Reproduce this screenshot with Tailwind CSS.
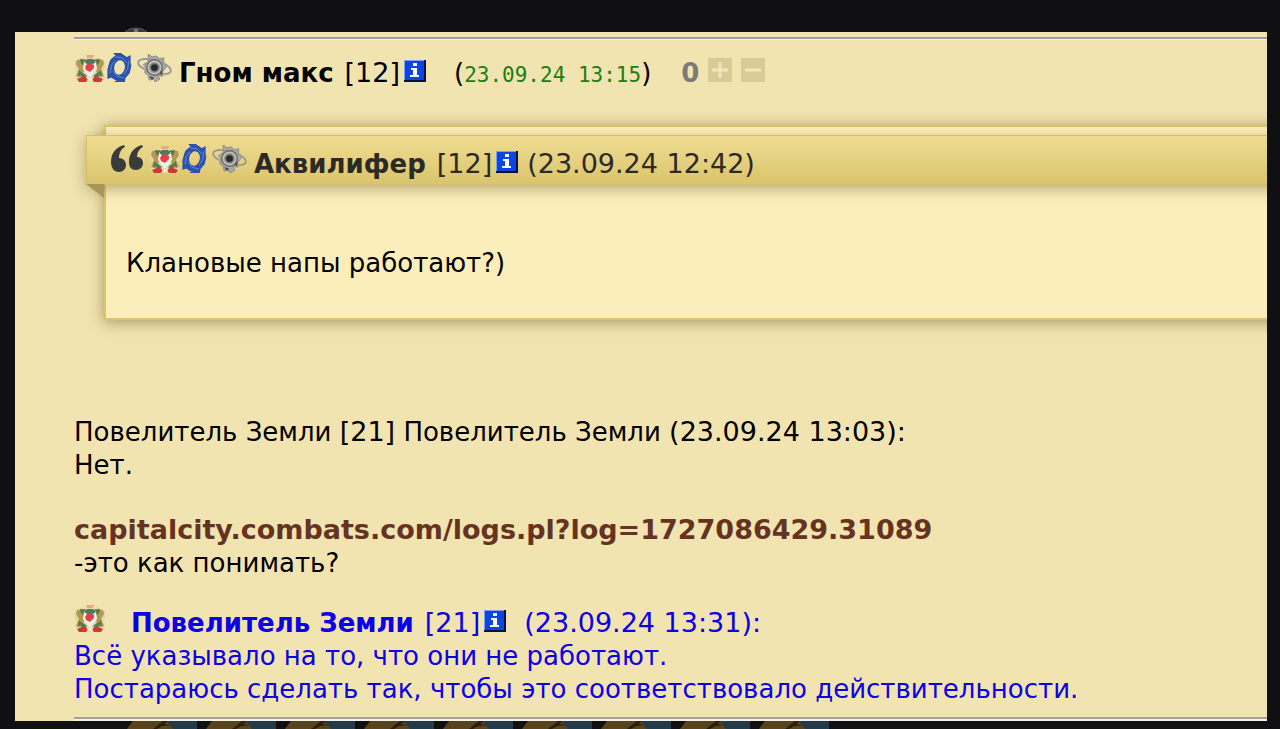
<!DOCTYPE html>
<html lang="ru">
<head>
    <meta charset="UTF-8">
    <meta name="viewport" content="width=device-width, initial-scale=1.0">
    <title>Форум</title>
    <script src="https://cdn.jsdelivr.net/npm/@tailwindcss/browser@4"></script>
</head>
<body class="bg-[#101013] min-h-screen overflow-hidden font-['DejaVu_Sans',Verdana,sans-serif] text-[26px] leading-[33px] text-black">

    <!-- Shared icons -->
    <svg class="hidden">
        <symbol id="crest" viewBox="0 0 32 28">
            <path d="M1 7l8-4 4 2 3-2 3 2 4-2 8 4v7l-2 4 2 6-6 4H7l-6-4 2-6-2-4z" fill="#e2d7ab"/>
            <path d="M3 6l8-1 1 6-2 6-4 6-4-1 3-7-3-5z" fill="#b39a50"/>
            <path d="M29 6l-8-1-1 6 2 6 4 6 4-1-3-7 3-5z" fill="#b39a50"/>
            <path d="M6 5l6 1-1 7-4-4zM26 5l-6 1 1 7 4-4zM5 16l3 3-4 4zM27 16l-3 3 4 4z" fill="#5d7444"/>
            <path d="M10 7h12l1 8-7 9-7-9z" fill="#f1f2e6"/>
            <path d="M10 8l3-3h6l3 3-3 2h-6z" fill="#4d7d5c"/>
            <path d="M11 13l2-3 3-1 4 2v3l-4 4-4-2z" fill="#e2404a"/>
            <path d="M12 1h8l-1 3h-6z" fill="#e8a883"/>
            <path d="M8 18l5 4-3 2-4-2zM24 18l-5 4 3 2 4-2z" fill="#4a8455"/>
            <path d="M3 25l7-3 4 3-2 3H5zM29 25l-7-3-4 3 2 3h7z" fill="#cf3a35"/>
            <path d="M13 24h6l-1 3h-4z" fill="#f3ead0"/>
        </symbol>
        <symbol id="swirl" viewBox="0 0 25 30">
            <ellipse cx="12.500" cy="15" rx="8.500" ry="10.500" transform="rotate(12 12.500 15)" fill="none" stroke="#2c52ae" stroke-width="6"/>
            <path d="M6 0h8l5 4-8 2zM24 2v10l-3 3-4-9zM25 12l-2 9-4 4V15zM18 30H7l4-3 8-3zM0 27V16l4-2 4 10zM0 17l3-10 5-4-2 12z" fill="#2c52ae"/>
            <path d="M8 4l7 1 5 5M22 8l-1 8-4 6M17 26l-7-2-4-5M3 21l1-8 4-5" fill="none" stroke="#6c8bcf" stroke-width="1"/>
        </symbol>
        <symbol id="orbit" viewBox="0 0 37 29">
            <path d="M12 0l4 3 4-1 4 3 4-1v5l3 4-4 5v5l-5-1 2 4-5 3-1-3-5 1-1-5-4-3 2-4-3-4 5-3z" fill="#aaa9a4" stroke="#8a8a86" stroke-width="1"/>
            <ellipse cx="18.500" cy="13" rx="17.500" ry="6.500" transform="rotate(16 18.500 13)" fill="none" stroke="#9c9b98" stroke-width="2"/>
            <circle cx="18.500" cy="14" r="8" fill="#c2c1bb" stroke="#6e6e6c" stroke-width="1.500"/>
            <circle cx="18.500" cy="14" r="5" fill="#777" stroke="#8a8a8a" stroke-width="1"/>
            <circle cx="18.500" cy="14" r="3.500" fill="#2a2a2a"/>
            <path d="M13 23l5 1-2 3zM24 20l3-3-1 5z" fill="#4a4a4a"/>
        </symbol>
        <symbol id="info" viewBox="0 0 22 22">
            <path d="M0 0h22v22H0z" fill="#0a1036"/>
            <path d="M0 0h20v20H0z" fill="#7aa0f5"/>
            <path d="M1 1h19v19H1z" fill="#0b45e4"/>
            <path d="M9 3h4v3H9zM7 8h6v7h2v2H6v-2h3v-5H7z" fill="#fff"/>
        </symbol>
        <symbol id="tile" viewBox="0 0 79 8">
            <path d="M22 0h48v8H22z" fill="#243a49"/>
            <path d="M6 0h34l6 8H0z" fill="#59431c"/>
            <path d="M36 0h5l-4 3 7 1-9 1-5 3h-4l5-4z" fill="#2b1c0d"/>
        </symbol>
    </svg>

    <header class="relative h-8">
        <svg class="absolute left-[124px] bottom-0 w-6 h-[5px]" viewBox="0 0 24 5">
            <path d="M1 5Q5 1 12 1t11 4" fill="#3b3b3b" stroke="#5c5c5c"/>
            <path d="M10 2h4v3h-4z" fill="#777"/>
        </svg>
    </header>

    <main class="ml-[15px] mr-[13px] pt-[5px] pl-[59px] bg-[#f1e4b0] overflow-hidden">
        <hr class="h-[3px] border-t-2 border-b border-t-[#a09ea3] border-b-[#f6f0dc]">

        <article>
            <div class="flex items-baseline mt-[13px]">
                <svg class="w-8 h-7"><use href="#crest"/></svg>
                <svg class="w-[25px] h-[29px] ml-px"><use href="#swirl"/></svg>
                <svg class="w-[37px] h-7 ml-1"><use href="#orbit"/></svg>
                <b class="ml-[6px]">Гном макс</b>
                <span class="ml-[11px] text-[27px]">[12]</span>
                <a href="#" aria-label="Информация" class="ml-1"><svg class="w-[22px] h-[22px]"><use href="#info"/></svg></a>
                <span class="ml-7">(<span class="font-['DejaVu_Sans_Mono',monospace] text-[21px] text-[#1e7d12]">23.09.24 13:15</span>)</span>
                <b class="ml-[30px] text-[#7d7a78]">0</b>
                <button aria-label="Плюс" class="ml-[9px]"><svg class="w-6 h-6" viewBox="0 0 24 24"><path d="M0 0h24v24H0z" fill="#d9cb98"/><path d="M12 4v16M4 12h16" stroke="#f1e6bd" stroke-width="3"/></svg></button>
                <button aria-label="Минус" class="ml-[9px]"><svg class="w-6 h-6" viewBox="0 0 24 24"><path d="M0 0h24v24H0z" fill="#d9cb98"/><path d="M4 12h16" stroke="#f1e6bd" stroke-width="3"/></svg></button>
            </div>

            <blockquote class="mt-[33px] ml-[30px] -mr-8 pt-2 pb-[38px] bg-[#fceeba] border-2 border-[#dcc468] shadow-[0_2px_14px_rgba(90,70,20,0.5)]">
                <div class="relative flex items-baseline -ml-5 pl-6 pt-2 pb-[3px] border border-[#d5bf68] bg-linear-to-b from-[#f0dd92] to-[#dac46c] text-[#2c2a26] shadow-[0_4px_14px_rgba(90,70,20,0.4)]">
                    <svg class="w-[33px] h-7 mb-1" viewBox="0 0 33 28"><path d="M13 0C5 2 0 8 0 17c0 6 3 10 8 10 4 0 7-3 7-7s-3-7-7-7c0-5 2-9 6-11zM31 0C23 2 18 8 18 17c0 5 2 8 7 8 4 0 7-3 7-7s-3-6-6-6c0-4 2-8 6-10z" fill="#3c3b3c"/></svg>
                    <svg class="w-8 h-7 ml-[5px]"><use href="#crest"/></svg>
                    <svg class="w-[25px] h-[29px] ml-px"><use href="#swirl"/></svg>
                    <svg class="w-[37px] h-7 ml-1"><use href="#orbit"/></svg>
                    <b class="ml-[6px]">Аквилифер</b>
                    <span class="ml-[11px] text-[27px]">[12]</span>
                    <a href="#" aria-label="Информация" class="ml-1"><svg class="w-[22px] h-[22px]"><use href="#info"/></svg></a>
                    <span class="ml-[9px] text-[27px]">(23.09.24 12:42)</span>
                    <svg class="absolute -left-px top-full w-[18px] h-[14px]" viewBox="0 0 18 14"><path d="M0 0h18v14z" fill="#a8955a"/></svg>
                </div>
                <p class="mt-[62px] ml-5">Клановые напы работают?)</p>
            </blockquote>

            <p class="mt-[95px]">Повелитель Земли <span class="text-[27px]">[21]</span> Повелитель Земли <span class="text-[27px]">(23.09.24 13:03):</span><br>Нет.</p>
            <p class="mt-[31px]">
                <a href="#" class="font-bold text-[27px] text-[#663322]">capitalcity.combats.com/logs.pl?log=1727086429.31089</a><br>
                -это как понимать?
            </p>

            <div class="mt-6 text-[#0b00e8]">
                <div class="flex items-baseline">
                    <svg class="w-8 h-7"><use href="#crest"/></svg>
                    <b class="ml-[25px]">Повелитель Земли</b>
                    <span class="ml-[11px] text-[27px]">[21]</span>
                    <a href="#" aria-label="Информация" class="ml-1"><svg class="w-[22px] h-[22px]"><use href="#info"/></svg></a>
                    <span class="ml-[18px] text-[27px]">(23.09.24 13:31):</span>
                </div>
                <p>Всё указывало на то, что они не работают.<br>Постараюсь сделать так, чтобы это соответствовало действительности.</p>
            </div>
        </article>

        <hr class="mt-[11px] h-1 border-t-2 border-b-2 border-t-[#a9a18f] border-b-[#f4f1ea]">
    </main>

    <footer class="flex h-2 pl-[127px]">
        <svg class="w-[79px] h-2"><use href="#tile"/></svg>
        <svg class="w-[79px] h-2"><use href="#tile"/></svg>
        <svg class="w-[79px] h-2"><use href="#tile"/></svg>
        <svg class="w-[79px] h-2"><use href="#tile"/></svg>
        <svg class="w-[79px] h-2"><use href="#tile"/></svg>
        <svg class="w-[79px] h-2"><use href="#tile"/></svg>
        <svg class="w-[79px] h-2"><use href="#tile"/></svg>
        <svg class="w-[79px] h-2"><use href="#tile"/></svg>
        <svg class="w-[79px] h-2"><use href="#tile"/></svg>
    </footer>
</body>
</html>
